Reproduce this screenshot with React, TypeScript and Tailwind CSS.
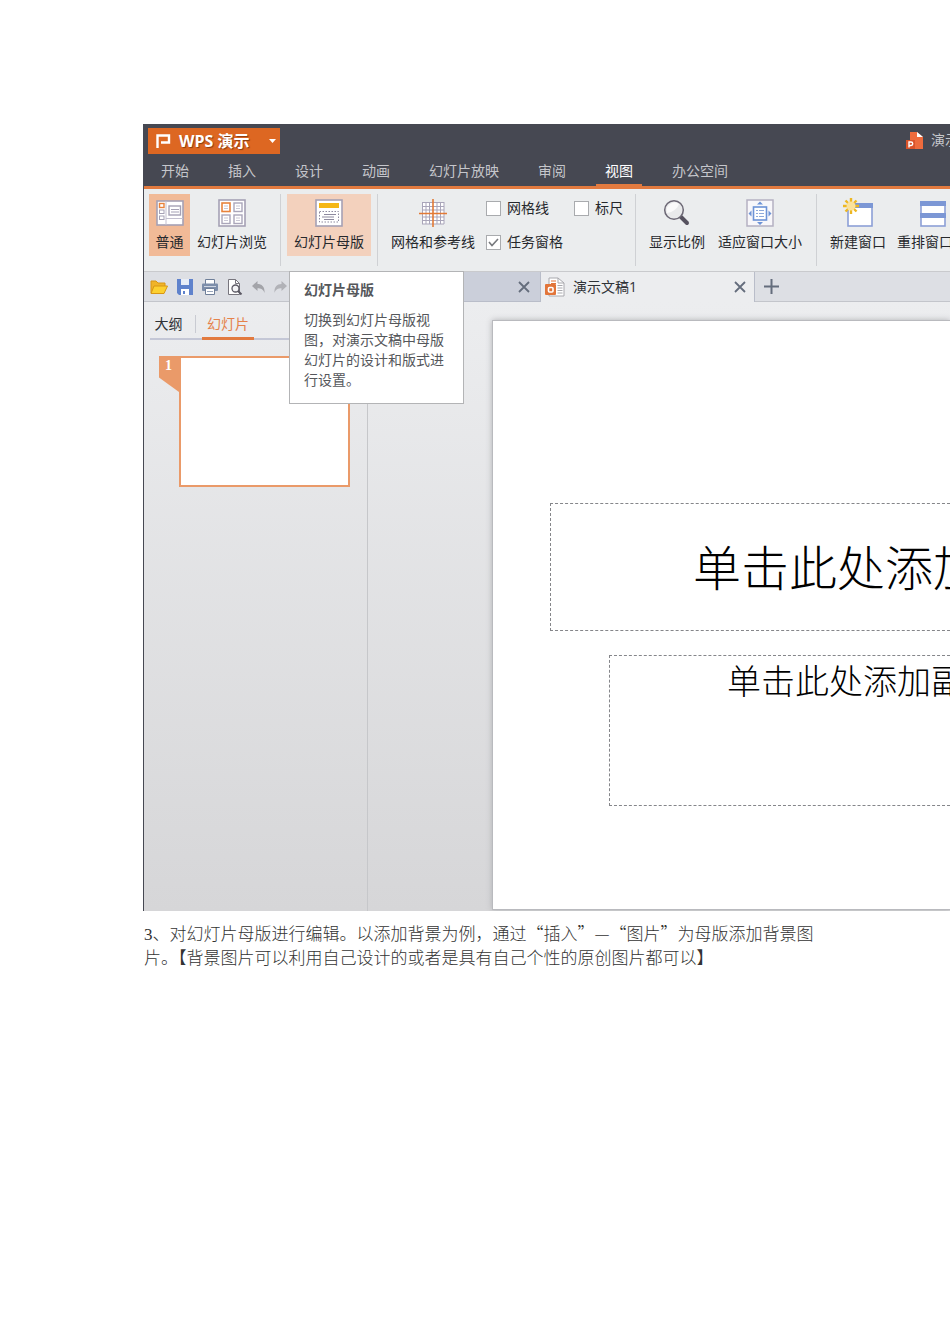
import type { ReactNode } from "react";

const menus = ["开始", "插入", "设计", "动画", "幻灯片放映", "审阅", "视图", "办公空间"];

const NormalIcon = () => (
  <svg width="28" height="28" viewBox="0 0 28 28" fill="none">
    <rect x="1" y="2" width="26" height="24" fill="#fff" stroke="#a5a1b5" strokeWidth="1.6" />
    <path d="M10 2v24M10 19.500h17" stroke="#c3c0d0" />
    <rect x="3.500" y="4.500" width="4.500" height="4" stroke="#e8833c" strokeWidth="1.4" />
    <rect x="3.500" y="11" width="4.500" height="3.500" stroke="#a5a1b5" />
    <rect x="3.500" y="17" width="4.500" height="3.500" stroke="#a5a1b5" />
    <rect x="13" y="7" width="11.500" height="9" stroke="#a5a1b5" strokeWidth="1.4" />
    <path d="M15 10.500h8M15 13h8" stroke="#a5a1b5" />
  </svg>
);

const SorterIcon = () => (
  <svg width="28" height="28" viewBox="0 0 28 28" fill="none">
    <rect x="1" y="1" width="26" height="26" fill="#fff" stroke="#a5a1b5" strokeWidth="1.6" />
    <rect x="4" y="4" width="8" height="8.500" stroke="#e8833c" strokeWidth="1.6" />
    <rect x="16" y="4" width="8" height="8.500" stroke="#aaa6ba" strokeWidth="1.4" />
    <rect x="4" y="16" width="8" height="8.500" stroke="#aaa6ba" strokeWidth="1.4" />
    <rect x="16" y="16" width="8" height="8.500" stroke="#aaa6ba" strokeWidth="1.4" />
    <path d="M6 7h4M6 9.500h4M18 7h4M18 9.500h4M6 19h4M6 21.500h4M18 19h4M18 21.500h4" stroke="#c9c7d4" />
  </svg>
);

const MasterIcon = () => (
  <svg width="28" height="28" viewBox="0 0 28 28" fill="none">
    <rect x="1" y="1" width="26" height="26" fill="#fff" stroke="#a5a1b5" strokeWidth="1.6" />
    <rect x="4" y="4" width="20" height="5" fill="#f5b716" />
    <rect x="4.500" y="12.500" width="19" height="10.500" stroke="#8e8a9f" strokeDasharray="1.500 1.500" />
    <path d="M9 15.500h12M7 18h12M9 20.500h10" stroke="#8e8a9f" />
  </svg>
);

const GridIcon = () => (
  <svg width="28" height="28" viewBox="0 0 28 28" fill="none">
    <rect x="3" y="3" width="22" height="22" fill="#fff" />
    <path d="M3 3.500h22M3 7.500h22M3 11h22M3 18h22M3 21.500h22M3 25h22M3.500 3v22M7 3v22M10.500 3v22M18 3v22M21.500 3v22M25 3v22" stroke="#a9a5b9" />
    <path d="M14 0v28M0 14.500h28" stroke="#e27a35" strokeWidth="1.6" />
  </svg>
);

const ZoomIcon = () => (
  <svg width="28" height="28" viewBox="0 0 28 28" fill="none">
    <path d="M17.500 17.500L24 24" stroke="#56525f" strokeWidth="4" strokeLinecap="round" />
    <circle cx="11" cy="11" r="9.300" fill="#e9eaeb" stroke="#6c6875" strokeWidth="1.5" />
    <path d="M4 14A8 8 0 0 1 16 5C14 10 10 13 4 14Z" fill="#fafafa" />
  </svg>
);

const FitIcon = () => (
  <svg width="28" height="28" viewBox="0 0 28 28" fill="none">
    <rect x="1" y="1" width="26" height="26" fill="#f8f7fa" stroke="#b5b1c2" strokeWidth="1.5" />
    <rect x="7.500" y="8" width="13" height="13" fill="#fff" stroke="#6d93d6" strokeWidth="1.6" />
    <path d="M10 11.500h2M13 11.500h5M10 14.500h2M13 14.500h5M10 17.500h2M13 17.500h5" stroke="#8da9db" />
    <path d="M11 5.500L14 2.500l3 3zM11 23l3 3 3-3zM5.500 11.500l-3 3 3 3zM22.500 11.500l3 3-3 3z" fill="#6d93d6" />
  </svg>
);

const NewWindowIcon = () => (
  <svg width="30" height="30" viewBox="0 0 30 30" fill="none">
    <rect x="5" y="6" width="24" height="22" fill="#fff" stroke="#8c9fd6" strokeWidth="1.6" />
    <path d="M5 5h25v5H5z" fill="#7c97d5" />
    <g stroke="#edb722" strokeWidth="2.400">
      <path d="M8 0v4M8 12v4M0 8h4M12 8h4M2.500 2.500l3 3M10.500 10.500l3 3M13.500 2.500l-3 3M5.500 10.500l-3 3" />
    </g>
    <circle cx="8" cy="8" r="4.500" fill="#fbe29a" />
  </svg>
);

const ArrangeIcon = () => (
  <svg width="28" height="28" viewBox="0 0 28 28" fill="none">
    <rect x="2" y="3" width="24" height="24" fill="#fff" stroke="#8c9fd6" strokeWidth="1.6" />
    <path d="M1 2h26v5H1zM1 14h26v5H1z" fill="#7c97d5" />
  </svg>
);

const DocIcon = () => (
  <svg width="20" height="20" viewBox="0 0 20 20" fill="none">
    <path d="M4 1h9l6 5v13H4z" fill="#fff" stroke="#a9a9ae" />
    <path d="M13 1v5h6" stroke="#a9a9ae" />
    <path d="M6 4h5M6 6.500h5" stroke="#e2753a" />
    <path d="M12.500 8.500h5M12.500 11h5M12.500 13.500h5M12.500 16h5" stroke="#a9a9ae" />
    <rect y="7" width="11" height="11" rx="1" fill="#e2753a" />
    <rect x="3.500" y="10.500" width="4.500" height="4.500" rx="1" stroke="#fff" strokeWidth="1.6" />
  </svg>
);

const CloseIcon = () => (
  <svg width="12" height="12" viewBox="0 0 12 12" fill="none" stroke="#646d7c" strokeWidth="1.8">
    <path d="M1 1l10 10M11 1L1 11" />
  </svg>
);

const FolderIcon = () => (
  <svg width="18" height="16" viewBox="0 0 18 16">
    <path d="M1 14V2h5l2 2h7v4" fill="#f0b429" stroke="#d89614" />
    <path d="M1 14.500L4 7h13.500l-3.500 7.500z" fill="#fcd030" stroke="#d89614" />
  </svg>
);

const SaveIcon = () => (
  <svg width="16" height="16" viewBox="0 0 16 16">
    <path d="M0 0h16v16H2l-2-2z" fill="#5f82cc" />
    <path d="M4 0h8v6H4z" fill="#e8edf7" />
    <path d="M4 10h8v6H4z" fill="#fff" />
    <path d="M6 12h2v3H6z" fill="#5f82cc" />
  </svg>
);

const PrintIcon = () => (
  <svg width="16" height="16" viewBox="0 0 16 16" fill="none">
    <path d="M3.500 5V.5h9V5" fill="#fff" stroke="#6f7f99" />
    <rect y="4.500" width="16" height="7.500" rx="1" fill="#7d8eaa" />
    <path d="M2 7.500h12" stroke="#cfd6e2" />
    <path d="M3.500 9.500h9v6h-9z" fill="#fff" stroke="#6f7f99" />
    <path d="M5 12.500h6" stroke="#9aa6bb" />
  </svg>
);

const PreviewIcon = () => (
  <svg width="16" height="16" viewBox="0 0 16 16" fill="none">
    <path d="M1.500.5h7L12.500 4.500v11h-11z" fill="#fff" stroke="#77757d" />
    <path d="M8.500.5v4h4" stroke="#77757d" />
    <circle cx="8.500" cy="9.500" r="3.500" fill="#f4f4f6" stroke="#5b5964" strokeWidth="1.300" />
    <path d="M11 12l3.500 3.500" stroke="#5b5964" strokeWidth="2" />
  </svg>
);

const UndoIcon = () => (
  <svg width="13" height="12" viewBox="0 0 13 12">
    <path d="M0 5L5.500 0v3C10 3 13 6 12.500 12 11.500 8.500 9 7.300 5.500 7.300V10z" fill="#a3a4a9" />
  </svg>
);

const RedoIcon = () => (
  <svg width="13" height="12" viewBox="0 0 13 12">
    <path d="M13 5L7.500 0v3C3 3 0 6 .5 12 1.500 8.500 4 7.300 7.500 7.300V10z" fill="#b1b2b7" />
  </svg>
);

const quickTools = [
  { label: "打开", icon: <FolderIcon /> },
  { label: "保存", icon: <SaveIcon /> },
  { label: "打印", icon: <PrintIcon /> },
  { label: "打印预览", icon: <PreviewIcon /> },
  { label: "撤消", icon: <UndoIcon /> },
  { label: "恢复", icon: <RedoIcon /> },
];

type RibbonButtonProps = { icon: ReactNode; label: string; className?: string; hasMenu?: boolean };

const RibbonButton = ({ icon, label, className = "", hasMenu = false }: RibbonButtonProps) => (
  <button className={`flex h-[62px] shrink-0 flex-col items-center whitespace-nowrap pt-1 text-sm leading-5 ${className}`}>
    <span className="flex h-[30px] items-center">{icon}</span>
    <span className="mt-1 flex items-center gap-2">
      {label}
      {hasMenu && (
        <svg width="8" height="4" viewBox="0 0 8 4" fill="#55575b">
          <path d="M0 0h7L3.500 4z" />
        </svg>
      )}
    </span>
  </button>
);

const Divider = () => <div className="h-[72px] w-px shrink-0 bg-[#cfd1d4]" />;

const CheckOption = ({ label, checked = false }: { label: string; checked?: boolean }) => (
  <label className="flex h-5 items-center gap-[6px] whitespace-nowrap text-sm leading-5">
    <span className="grid size-4 place-items-center">
      <input
        type="checkbox"
        defaultChecked={checked}
        className="peer col-start-1 row-start-1 size-[15px] appearance-none border border-[#a9abae] bg-white"
      />
      <svg
        className="pointer-events-none invisible col-start-1 row-start-1 peer-checked:visible"
        width="11"
        height="9"
        viewBox="0 0 11 9"
        fill="none"
        stroke="#77797d"
        strokeWidth="1.6"
      >
        <path d="M1 4l3 3.500L10 1" />
      </svg>
    </span>
    {label}
  </label>
);

const TitleBar = () => (
  <header className="border-b-[3px] border-[#e27a3f] bg-[#464852]">
    <div className="flex h-8 items-center justify-between pl-1">
      <button className="mt-[2px] flex h-[26px] w-[132px] items-center bg-[#dd6722] pl-2 text-white">
        <svg width="15" height="16" viewBox="0 0 15 16" fill="none" stroke="#fff" strokeWidth="2.400">
          <path d="M1.500 15V2.500h11.500v7H5" />
        </svg>
        <span className="ml-2 text-base font-bold leading-5 [text-shadow:1px_1px_1px_#8a3d10]">WPS 演示</span>
        <svg className="ml-auto mr-1" width="7" height="4" viewBox="0 0 7 4" fill="#fff">
          <path d="M0 0h7L3.500 4z" />
        </svg>
      </button>
      <div className="flex w-11 items-center gap-2 overflow-hidden whitespace-nowrap text-sm text-[#c5c6cb]">
        <svg className="shrink-0" width="17" height="17" viewBox="0 0 17 17">
          <path d="M4 0h7l6 5v12H4z" fill="#ee6b3d" />
          <path d="M11 0l6 5h-6z" fill="#fff" />
          <rect y="8" width="9" height="9" fill="#d9532a" />
          <path d="M3 15.500V10h2a1.600 1.600 0 0 1 0 3.500H3" fill="none" stroke="#fff" strokeWidth="1.400" />
        </svg>
        演示
      </div>
    </div>
    <nav className="flex h-[30px] gap-[21px] pl-2 text-sm text-[#c5c6cb]">
      {menus.map((menu) => (
        <button
          key={menu}
          className={`shrink-0 whitespace-nowrap border-b-2 px-[9px] pt-[2px] ${
            menu === "视图" ? "border-[#e27a3f] text-white" : "border-transparent"
          }`}
        >
          {menu}
        </button>
      ))}
    </nav>
  </header>
);

const Ribbon = () => (
  <div className="flex h-[83px] border-b border-[#c9cacd] bg-[#ebedee] pl-[5px] pt-[5px] text-[#26282c]">
    <RibbonButton icon={<NormalIcon />} label="普通" className="w-[41px] bg-[#f1ba97]" />
    <RibbonButton icon={<SorterIcon />} label="幻灯片浏览" className="mr-[6px] w-[84px]" />
    <Divider />
    <div className="relative mx-[6px] shrink-0">
      <RibbonButton icon={<MasterIcon />} label="幻灯片母版" className="w-[84px] bg-[#f3d1bd]" />
      <div
        role="tooltip"
        className="absolute left-[2px] top-[77px] z-10 h-[133px] w-[175px] border border-[#b3b4b6] bg-white px-[14px] pt-2 text-sm leading-5 text-[#55575b]"
      >
        <p className="font-bold">幻灯片母版</p>
        <p className="mt-[10px]">切换到幻灯片母版视图，对演示文稿中母版幻灯片的设计和版式进行设置。</p>
      </div>
    </div>
    <Divider />
    <RibbonButton icon={<GridIcon />} label="网格和参考线" className="ml-[10px] w-[90px]" />
    <div className="ml-[7px] flex shrink-0 flex-col gap-[14px] pt-1">
      <div className="flex gap-6">
        <CheckOption label="网格线" />
        <CheckOption label="标尺" />
      </div>
      <CheckOption label="任务窗格" checked />
    </div>
    <div className="w-3 shrink-0" />
    <Divider />
    <RibbonButton icon={<ZoomIcon />} label="显示比例" className="ml-[10px] w-[62px]" />
    <RibbonButton icon={<FitIcon />} label="适应窗口大小" className="ml-[6px] mr-[10px] w-[92px]" />
    <Divider />
    <RibbonButton icon={<NewWindowIcon />} label="新建窗口" className="ml-[10px] w-[62px]" />
    <RibbonButton icon={<ArrangeIcon />} label="重排窗口" className="ml-2 w-[72px]" hasMenu />
  </div>
);

const TabBar = () => (
  <div className="flex h-[30px] bg-[#dddfe4] text-sm text-[#2f3237]">
    <div className="flex w-[156px] shrink-0 items-center gap-[9px] border-b border-[#c3c5cb] pl-[6px]">
      {quickTools.map((tool) => (
        <button key={tool.label} aria-label={tool.label} className="shrink-0">
          {tool.icon}
        </button>
      ))}
    </div>
    <div className="flex w-[241px] shrink-0 items-center justify-end border-b border-r border-[#b9bdc9] bg-[#cbcfda] pr-[10px]">
      <button aria-label="关闭首页">
        <CloseIcon />
      </button>
    </div>
    <div className="flex w-[214px] shrink-0 items-center border-r border-[#b9bdc9] bg-[#ecedef] pl-1 pr-2">
      <DocIcon />
      <span className="ml-2">演示文稿1</span>
      <button aria-label="关闭演示文稿1" className="ml-auto">
        <CloseIcon />
      </button>
    </div>
    <div className="flex flex-1 items-center border-b border-[#c3c5cb] pl-[9px]">
      <button aria-label="新建标签">
        <svg width="15" height="15" viewBox="0 0 15 15" stroke="#646d7c" strokeWidth="2">
          <path d="M7.500 0v15M0 7.500h15" />
        </svg>
      </button>
    </div>
  </div>
);

const SlidePanel = () => (
  <aside className="w-[224px] shrink-0 border-r border-[#c6c7ca] pl-[6px] pt-[9px] text-sm">
    <div className="flex h-[29px] border-b-2 border-[#c4c7d6]">
      <button className="h-[26px] w-[45px] pr-2 text-[#2f3237]">大纲</button>
      <div className="mt-1 h-[18px] w-px bg-[#c9cbd2]" />
      <button className="ml-[6px] h-[29px] w-[52px] border-b-[3px] border-[#e27a3f] text-[#e5824a]">幻灯片</button>
    </div>
    <div className="mt-4 flex pl-[9px]">
      <div className="h-9 w-5 bg-[#ea9a69] pl-[6px] font-[Liberation_Serif,serif] text-sm font-bold leading-5 text-white [clip-path:polygon(0_0,100%_0,100%_100%,0_60%)]">
        1
      </div>
      <div className="h-[131px] w-[171px] border-2 border-[#ea9a69] bg-white" />
    </div>
  </aside>
);

const Slide = () => (
  <main className="min-w-0 flex-1 pl-[124px] pt-[18px]">
    <section className="h-[590px] overflow-hidden border border-r-0 border-[#b9babe] bg-white pt-[182px] font-light text-black shadow-[0_0_6px_#b0b1b5]">
      <div className="ml-[57px] h-[128px] overflow-hidden whitespace-nowrap border border-r-0 border-dashed border-[#85868a] pl-[142px] text-5xl leading-[128px]">
        单击此处添加
      </div>
      <div className="ml-[116px] mt-6 h-[151px] overflow-hidden whitespace-nowrap border border-r-0 border-dashed border-[#85868a] pl-[117px] text-[34px] leading-[50px]">
        单击此处添加副
      </div>
    </section>
  </main>
);

const App = () => {
  return (
    <div className="min-h-screen overflow-x-hidden bg-white pt-[124px] font-['Open_Sans','Noto_Sans_CJK_SC',sans-serif]">
      <div className="ml-[143px] overflow-hidden border-l border-[#464852]">
        <TitleBar />
        <Ribbon />
        <TabBar />
        <div className="flex h-[609px] bg-gradient-to-b from-[#ecedef] to-[#d6d6d8]">
          <SlidePanel />
          <Slide />
        </div>
      </div>
      <p className="ml-36 mr-[130px] mt-[10px] font-['Noto_Sans_CJK_SC',sans-serif] text-[17px] font-light leading-6 text-[#333]">
        <span className="font-[Liberation_Serif,serif] leading-none">3</span>
        、对幻灯片母版进行编辑。以添加背景为例，通过“插入”—“图片”为母版添加背景图
        <br />
        片。【背景图片可以利用自己设计的或者是具有自己个性的原创图片都可以】
      </p>
    </div>
  );
};

export default App;
